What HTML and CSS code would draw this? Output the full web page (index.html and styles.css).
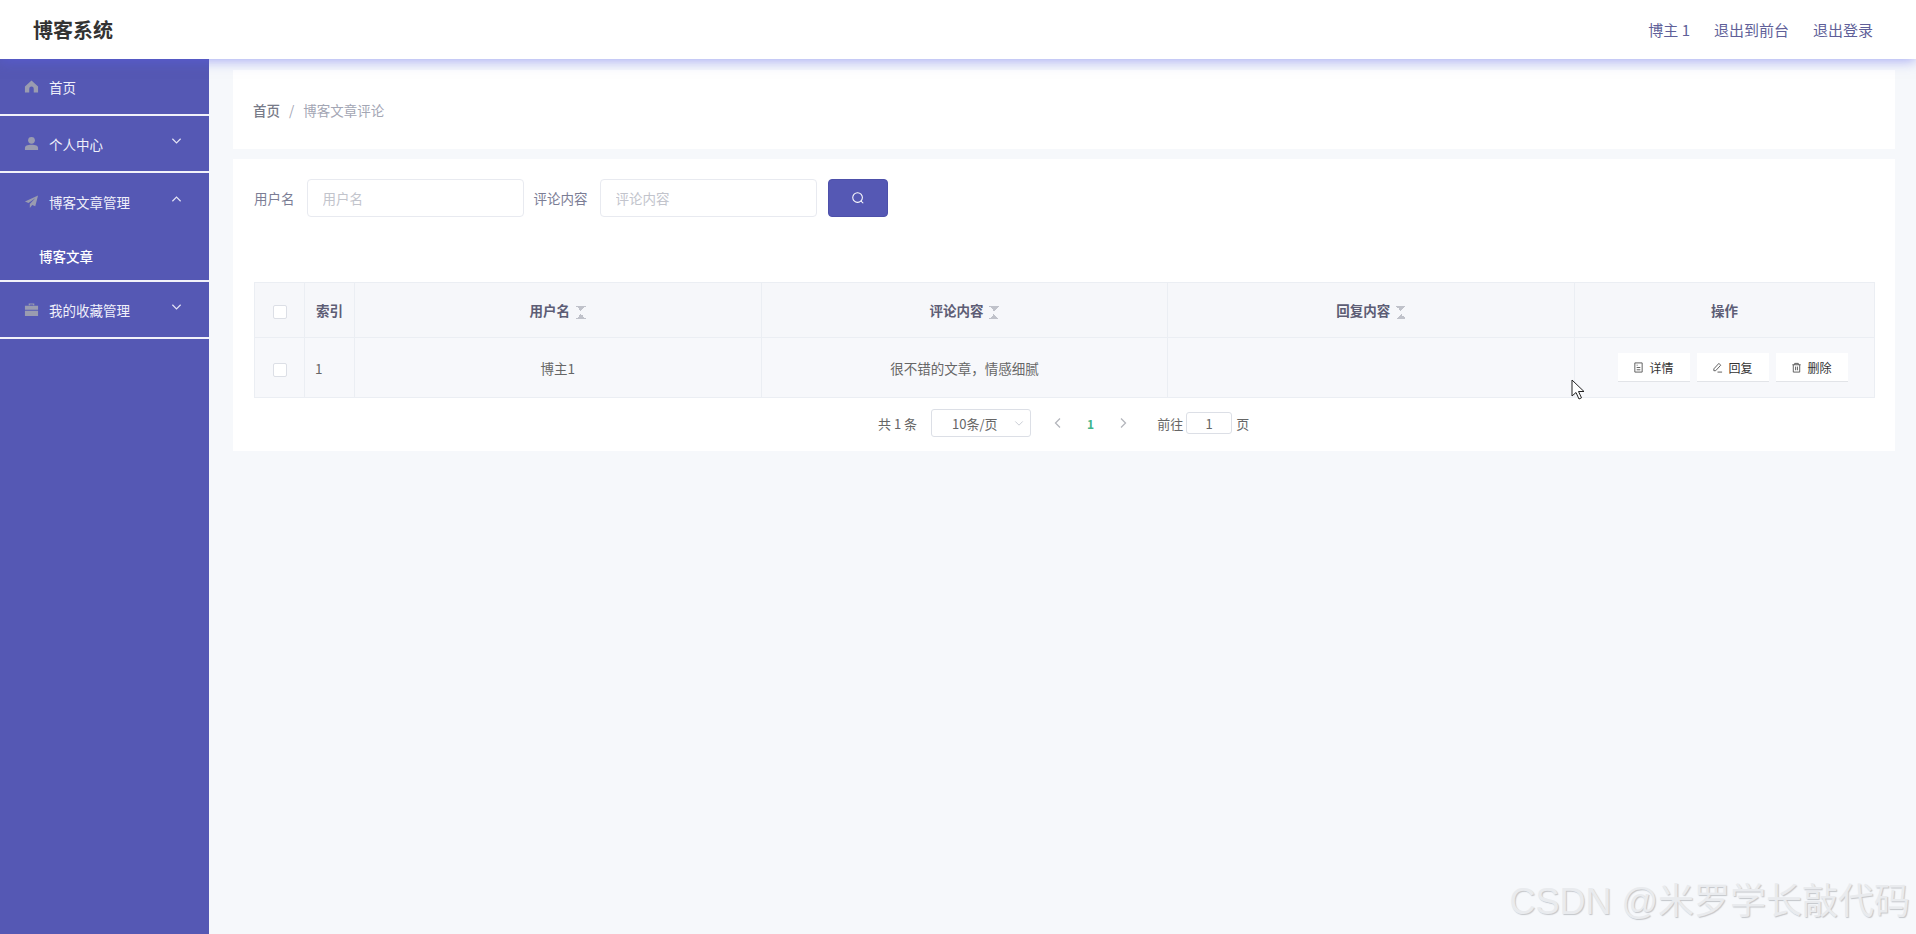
FILE: index.html
```html
<!DOCTYPE html>
<html lang="zh-CN">
<head>
    <meta charset="UTF-8">
    <meta name="viewport" content="width=device-width, initial-scale=1.0">
    <title>博客系统</title>
    <link rel="stylesheet" href="styles.css">
</head>
<body>
    <header class="topbar">
        <div class="brand">博客系统</div>
        <nav class="top-links">
            <span>博主 1</span>
            <a>退出到前台</a>
            <a>退出登录</a>
        </nav>
    </header>

    <div class="layout">
        <aside class="sidebar">
            <div class="menu-item">
                <svg class="menu-icon" viewBox="0 0 16 16"><path d="M8 1.5 1 8v6.5h4.6v-4a2.4 2.4 0 0 1 4.8 0v4H15V8z"/></svg>
                <span>首页</span>
            </div>
            <div class="menu-item">
                <svg class="menu-icon" viewBox="0 0 16 16"><circle cx="8" cy="4.6" r="3.6"/><path d="M1 15v-2.2C1 10.400 3.500 9.400 8 9.400s7 1 7 3.400V15z"/></svg>
                <span>个人中心</span>
                <svg class="arrow" viewBox="0 0 12 8"><path d="M1.500 1.500 6 6l4.500-4.500"/></svg>
            </div>
            <div class="menu-group">
                <div class="menu-title">
                    <svg class="menu-icon" viewBox="0 0 16 16"><path d="M15 1.500 1 8l3.800 1.600L12 4.500 6.200 10.600V15l2.600-3.300 3.200 1.400z"/></svg>
                    <span>博客文章管理</span>
                    <svg class="arrow" viewBox="0 0 12 8"><path d="M1.500 6.500 6 2l4.500 4.500"/></svg>
                </div>
                <div class="submenu-item">博客文章</div>
            </div>
            <div class="menu-item">
                <svg class="menu-icon" viewBox="0 0 16 16"><path d="M5 3.500V1.500h6v2h-1.300v-.8H6.300v.8zM1 4h14v4.200H1zM1 9.200h14V15H1z"/></svg>
                <span>我的收藏管理</span>
                <svg class="arrow" viewBox="0 0 12 8"><path d="M1.500 1.500 6 6l4.500-4.500"/></svg>
            </div>
        </aside>

        <main class="content">
            <div class="card crumbs">
                <b>首页</b>
                <i>/</i>
                <span>博客文章评论</span>
            </div>

            <div class="card list-card">
                <form class="search-form">
                    <label>用户名</label>
                    <input class="search-input" type="text" placeholder="用户名">
                    <label>评论内容</label>
                    <input class="search-input" type="text" placeholder="评论内容">
                    <button class="search-btn" type="button">
                        <svg viewBox="0 0 16 16"><circle cx="7.500" cy="7.500" r="5.500"/><path d="m11.500 11.500 2.500 2.500"/></svg>
                    </button>
                </form>

                <table class="data-table">
                    <colgroup>
                        <col class="col-small"><col class="col-small"><col><col><col><col class="col-actions">
                    </colgroup>
                    <thead>
                        <tr>
                            <th><span class="check"></span></th>
                            <th>索引</th>
                            <th>用户名<span class="sort"></span></th>
                            <th>评论内容<span class="sort"></span></th>
                            <th>回复内容<span class="sort"></span></th>
                            <th>操作</th>
                        </tr>
                    </thead>
                    <tbody>
                        <tr>
                            <td><span class="check"></span></td>
                            <td class="index-cell">1</td>
                            <td>博主1</td>
                            <td>很不错的文章，情感细腻</td>
                            <td></td>
                            <td>
                                <div class="actions">
                                    <button type="button">
                                        <svg viewBox="0 0 12 12"><path d="M2 1h8v10H2zM4 3.500h1M4 6h4M4 8.500h4"/></svg>详情
                                    </button>
                                    <button type="button">
                                        <svg viewBox="0 0 12 12"><path d="M7.500 1.500 9.500 3.500 4 9.500H2V7.500zM6 11h5"/></svg>回复
                                    </button>
                                    <button type="button">
                                        <svg viewBox="0 0 12 12"><path d="M1.500 3h9M4 3V1.500h4V3M2.500 3v8h7V3M5 5v4M7 5v4"/></svg>删除
                                    </button>
                                </div>
                            </td>
                        </tr>
                    </tbody>
                </table>

                <div class="pager">
                    <span class="total">共 1 条</span>
                    <div class="page-size">
                        <span>10条/页</span>
                        <svg viewBox="0 0 12 8"><path d="M1.500 1.500 6 6l4.500-4.500"/></svg>
                    </div>
                    <svg class="page-arrow" viewBox="0 0 8 12"><path d="M6 1.500 1.500 6 6 10.500"/></svg>
                    <b class="page-num">1</b>
                    <svg class="page-arrow" viewBox="0 0 8 12"><path d="M2 1.500 6.500 6 2 10.500"/></svg>
                    <span class="goto">前往</span>
                    <input class="page-input" type="text" value="1">
                    <span>页</span>
                </div>
            </div>
        </main>
    </div>

    <svg class="cursor" viewBox="0 0 14 22"><path d="M1 1v16l4-3.500 3 6.500 2.500-1.200-3-6.300H13z"/></svg>
    <div class="watermark">CSDN @米罗学长敲代码</div>
</body>
</html>
```

FILE: styles.css
```css
* {
    box-sizing: border-box;
}

html, body {
    height: 100%;
}

body {
    margin: 0;
    overflow: hidden;
    background-color: #f6f8fb;
    color: #666;
    font-family: "Noto Sans CJK SC", "Liberation Sans", sans-serif;
    font-size: 14px;
}

.topbar {
    position: relative;
    z-index: 2;
    height: 59px;
    display: flex;
    justify-content: space-between;
    align-items: center;
    padding: 0 43px 0 33px;
    background-color: #fff;
    box-shadow: 0 2px 12px rgba(90, 96, 235, 0.5);
}

.brand {
    font-size: 20px;
    font-weight: 700;
    color: #333;
}

.top-links {
    display: flex;
    gap: 24px;
    font-size: 15px;
    color: #5f5f99;
}

.layout {
    display: flex;
    height: 875px;
}

.sidebar {
    width: 209px;
    flex-shrink: 0;
    background-color: #5558b4;
    color: #f0f0fa;
    font-size: 13.500px;
}

.menu-item,
.menu-title {
    height: 57px;
    display: flex;
    align-items: center;
    padding: 0 24px;
}

.menu-item {
    border-bottom: 2px solid #f2f2fa;
}

.menu-group {
    border-bottom: 2px solid #f2f2fa;
}

.menu-icon {
    width: 15px;
    height: 15px;
    margin-right: 10px;
    fill: #9a9cb0;
    flex-shrink: 0;
}

.arrow {
    width: 11px;
    height: 8px;
    margin: -6px 3px 0 auto;
    fill: none;
    stroke: #e4e4f4;
    stroke-width: 1.300;
}

.submenu-item {
    height: 50px;
    padding: 2px 0 0 39px;
    display: flex;
    align-items: center;
    font-weight: 500;
    color: #fff;
}

.content {
    flex: 1;
    padding: 11px 21px 0 24px;
}

.card {
    background-color: #fff;
}

.crumbs {
    height: 79px;
    display: flex;
    align-items: center;
    padding: 0 20px;
    font-size: 13.500px;
    color: #a3a6b4;
}

.crumbs b {
    font-weight: 500;
    color: #777a88;
}

.crumbs i {
    margin: 0 9px;
    font-style: normal;
}

.list-card {
    height: 292px;
    margin-top: 10px;
    padding: 20px 20px 0 21px;
}

.search-form {
    display: flex;
    align-items: center;
    height: 38px;
    color: #7b7d95;
    font-size: 13.500px;
}

.search-form label {
    margin-right: 12px;
}

.search-input {
    width: 217px;
    height: 38px;
    margin-right: 10px;
    padding: 0 15px;
    border: 1px solid #e8eaf0;
    border-radius: 4px;
    font: inherit;
    color: #666;
    outline: none;
}

.search-input::placeholder {
    color: #c2c4cc;
}

.search-btn {
    width: 60px;
    height: 38px;
    margin-left: 1px;
    display: flex;
    align-items: center;
    justify-content: center;
    border: 1px solid #4d50aa;
    border-radius: 4px;
    background-color: #5558b4;
    cursor: pointer;
}

.search-btn svg {
    width: 14px;
    height: 14px;
    fill: none;
    stroke: #fff;
    stroke-width: 1.200;
}

.data-table {
    width: 1621px;
    margin-top: 65px;
    table-layout: fixed;
    border-collapse: collapse;
    border: 1px solid #ebeef3;
    background-color: #f7f8fb;
}

.col-small {
    width: 50px;
}

.col-actions {
    width: 300px;
}

.data-table th,
.data-table td {
    padding: 0;
    border: 1px solid #ebeef3;
    text-align: center;
    font-size: 13.500px;
}

.data-table th {
    height: 55px;
    background-color: #f6f7fa;
    color: #5d5d75;
    font-weight: 700;
}

.data-table td {
    height: 60px;
}

.data-table .index-cell {
    padding-left: 10px;
    text-align: left;
}

.check {
    display: inline-block;
    width: 14px;
    height: 14px;
    vertical-align: middle;
    border: 1px solid #dcdfe6;
    border-radius: 2px;
    background-color: #fff;
}

.sort {
    display: inline-block;
    width: 10px;
    height: 13px;
    margin-left: 6px;
    vertical-align: middle;
    background:
        linear-gradient(to top right, transparent 50%, #c0c2ca 50%) 0 0 / 5px 5px no-repeat,
        linear-gradient(to top left, transparent 50%, #c0c2ca 50%) 5px 0 / 5px 5px no-repeat,
        linear-gradient(to bottom right, transparent 50%, #c0c2ca 50%) 0 8px / 5px 5px no-repeat,
        linear-gradient(to bottom left, transparent 50%, #c0c2ca 50%) 5px 8px / 5px 5px no-repeat;
}

.actions {
    display: flex;
    justify-content: center;
    gap: 7px;
    padding-left: 16px;
}

.actions button {
    width: 72px;
    height: 29px;
    display: flex;
    align-items: center;
    justify-content: center;
    gap: 5px;
    padding: 0;
    border: none;
    border-bottom: 1px solid #e2e4e8;
    background-color: #fff;
    color: #333;
    font: inherit;
    font-size: 12px;
    cursor: pointer;
}

.actions svg {
    width: 11px;
    height: 11px;
    fill: none;
    stroke: #555;
    stroke-width: 1;
}

.pager {
    display: flex;
    align-items: center;
    height: 28px;
    margin: 11px 0 0 624px;
    font-size: 13px;
    color: #666;
}

.total {
    margin-right: 14px;
}

.page-size {
    width: 100px;
    height: 28px;
    display: flex;
    align-items: center;
    justify-content: space-between;
    padding: 0 6px 0 20px;
    border: 1px solid #dcdfe6;
    border-radius: 3px;
}

.page-size svg {
    width: 10px;
    height: 7px;
    fill: none;
    stroke: #c0c4cc;
    stroke-width: 1;
}

.page-arrow {
    width: 8px;
    height: 12px;
    margin-left: 23px;
    fill: none;
    stroke: #b4b6bc;
    stroke-width: 1.300;
}

.page-num {
    margin-left: 25px;
    color: #3fb58a;
    font-size: 12px;
}

.page-num + .page-arrow {
    margin-left: 25px;
}

.goto {
    margin-left: 30px;
}

.page-input {
    width: 46px;
    height: 22px;
    margin: 0 4px 0 3px;
    padding: 0;
    border: 1px solid #dcdfe6;
    border-radius: 3px;
    text-align: center;
    font: inherit;
    color: #666;
}

.cursor {
    position: absolute;
    left: 1571px;
    top: 379px;
    width: 14px;
    height: 22px;
    fill: #fff;
    stroke: #222;
    stroke-width: 1;
}

.watermark {
    position: absolute;
    right: 6px;
    top: 879px;
    font-family: "Liberation Sans", "Noto Sans CJK SC", sans-serif;
    font-size: 36px;
    line-height: 46px;
    white-space: nowrap;
    color: #e9ebee;
    text-shadow: 1px 1px 1px #c4c6ca;
}
```
